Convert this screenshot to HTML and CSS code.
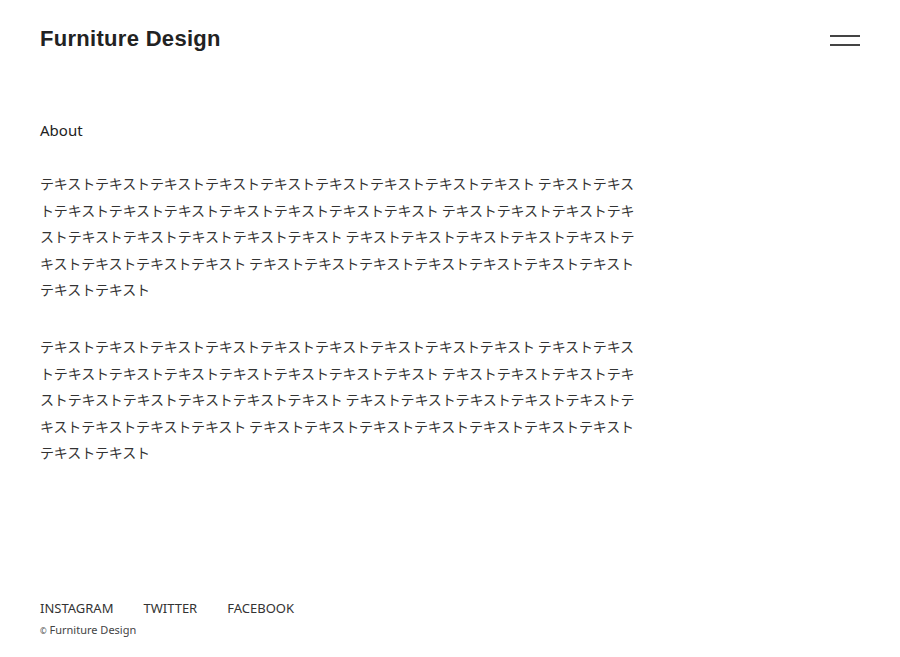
FILE: index.html
```html
<!DOCTYPE html>
<html lang="ja">
<head>
<meta charset="utf-8">
<title>Furniture Design</title>
<link rel="stylesheet" href="styles.css">
</head>
<body>
<div class="page">
  <header class="header">
    <h1 class="logo">Furniture Design</h1>
    <button class="menu" aria-label="menu"><span class="bar"></span><span class="bar"></span></button>
  </header>
  <main class="main">
    <h2 class="heading">About</h2>
    <p class="text">テキストテキストテキストテキストテキストテキストテキストテキストテキスト テキストテキストテキストテキストテキストテキストテキストテキストテキスト テキストテキストテキストテキストテキストテキストテキストテキストテキスト テキストテキストテキストテキストテキストテキストテキストテキストテキスト テキストテキストテキストテキストテキストテキストテキストテキストテキスト</p>
    <p class="text">テキストテキストテキストテキストテキストテキストテキストテキストテキスト テキストテキストテキストテキストテキストテキストテキストテキストテキスト テキストテキストテキストテキストテキストテキストテキストテキストテキスト テキストテキストテキストテキストテキストテキストテキストテキストテキスト テキストテキストテキストテキストテキストテキストテキストテキストテキスト</p>
  </main>
  <footer class="footer">
    <nav class="sns">
      <a class="sns-link" href="#">INSTAGRAM</a>
      <a class="sns-link" href="#">TWITTER</a>
      <a class="sns-link" href="#">FACEBOOK</a>
    </nav>
    <p class="copy"><span class="copy-mark">©</span> Furniture Design</p>
  </footer>
</div>
</body>
</html>
```
FILE: styles.css
```css
* { box-sizing: border-box; }
html, body { margin: 0; padding: 0; background: #fff; }
body { color: #333; font-family: "Noto Sans", "Noto Sans CJK JP", sans-serif; }
.page {
  min-height: 100vh;
  display: flex;
  flex-direction: column;
  padding: 0 40px;
}
.header {
  display: flex;
  justify-content: space-between;
  align-items: center;
  padding-top: 26px;
}
.logo {
  margin: 0;
  font-family: "Liberation Sans", Arial, sans-serif;
  font-weight: 700;
  font-size: 22px;
  letter-spacing: 0.3px;
  line-height: 26px;
  color: #222;
}
.menu {
  border: 0;
  background: none;
  padding: 0;
  width: 30px;
  height: 11px;
  display: flex;
  flex-direction: column;
  justify-content: space-between;
  cursor: pointer;
  margin-top: 2px;
}
.bar {
  display: block;
  width: 30px;
  height: 2px;
  background: #444;
}
.main {
  width: 602px;
  padding-top: 68px;
}
.heading {
  margin: 0;
  font-weight: 400;
  font-size: 15px;
  line-height: 20px;
  color: #222;
}
.text {
  margin: 30px 0 0;
  font-family: "Noto Sans CJK JP", sans-serif;
  font-size: 14px;
  letter-spacing: -0.15px;
  line-height: 26.6px;
  color: #333;
}
.footer {
  margin-top: auto;
  padding-bottom: 18px;
}
.sns {
  display: flex;
  gap: 30px;
}
.sns-link {
  font-size: 13px;
  line-height: 18px;
  color: #333;
  text-decoration: none;
}
.copy {
  margin: 5px 0 0;
  font-size: 11px;
  line-height: 16px;
  color: #444;
}
.copy-mark {
  font-size: 8px;
}
```
